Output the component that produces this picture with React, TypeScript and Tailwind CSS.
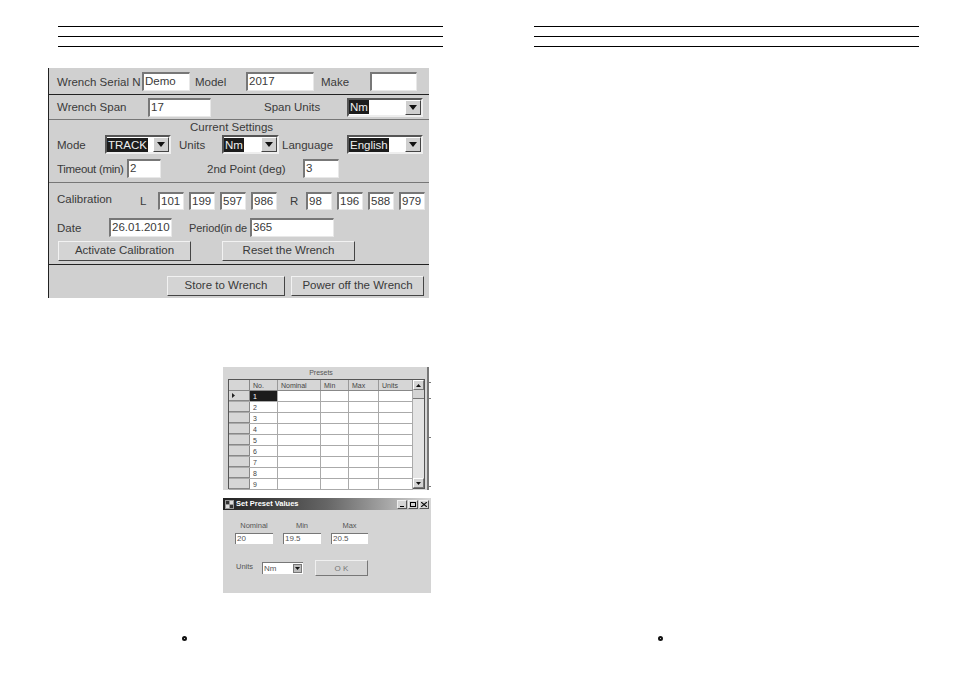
import React from "react";

const sunken = "border-t-2 border-l-2 border-t-[#777] border-l-[#777] border-b border-r border-b-[#e8e8e8] border-r-[#e8e8e8] bg-white";

function Label({ w, children, className = "" }: { w: string; children: React.ReactNode; className?: string }) {
  return <span className={`${w} ${className} shrink-0 whitespace-nowrap text-[11.5px] leading-[14px] text-[#3a3a3a]`}>{children}</span>;
}

function Input({ w, h = "h-[19px]", value, className = "" }: { w: string; h?: string; value?: string; className?: string }) {
  return <div className={`${w} ${h} ${sunken} ${className} shrink-0 flex items-center pl-[1px] text-[11.5px] leading-none text-[#3a3a3a] whitespace-nowrap`}>{value}</div>;
}

function Arrow({ size = "w-[16px] h-[15px]" }: { size?: string }) {
  return (
    <div className={`${size} bg-[#cfcfcf] border border-t-white border-l-white border-b-[#444] border-r-[#444] flex items-center justify-center shrink-0`}>
      <svg width="8" height="5" viewBox="0 0 8 5"><path d="M0 0h8L4 5z" fill="#111" /></svg>
    </div>
  );
}

function Select({ w, value, h = "h-[19px]" }: { w: string; value: string; h?: string }) {
  return (
    <div className={`${w} ${h} border-2 border-t-[#555] border-l-[#555] border-b-[#eee] border-r-[#eee] bg-white shrink-0 flex items-center justify-between`}>
      <span className="bg-[#1c1c1c] text-[#eee] text-[11.5px] leading-[14px] px-[1px]">{value}</span>
      <Arrow />
    </div>
  );
}

function Button({ w, children, className = "" }: { w: string; children: React.ReactNode; className?: string }) {
  return (
    <div className={`${w} ${className} h-[20px] shrink-0 bg-[#d4d4d4] border border-t-[#f2f2f2] border-l-[#f2f2f2] border-b-[#444] border-r-[#444] flex items-center justify-center text-[11.5px] text-[#3a3a3a]`}>
      {children}
    </div>
  );
}

function HeaderLines() {
  return (
    <div className="w-[385px] h-[21px] flex flex-col justify-between">
      <div className="h-px bg-black" />
      <div className="h-px bg-black" />
      <div className="h-px bg-black" />
    </div>
  );
}

function WrenchPanel() {
  const left = ["101", "199", "597", "986"];
  const right = ["98", "196", "588", "979"];
  return (
    <div className="ml-[48px] mt-[21px] w-[381px] h-[230px] bg-[#d0d0d0] border-l border-l-[#222] flex flex-col">
      <div className="h-[27px] border-b border-b-[#222] pl-[8px] pt-[1px] flex items-center shrink-0">
        <Label w="w-[85px]">Wrench Serial N</Label>
        <Input w="w-[48px]" value="Demo" />
        <Label w="w-[51px]" className="ml-[5px]">Model</Label>
        <Input w="w-[68px]" value="2017" />
        <Label w="w-[49px]" className="ml-[7px]">Make</Label>
        <Input w="w-[47px]" />
      </div>
      <div className="h-[25px] border-b border-b-[#777] pl-[8px] flex items-center shrink-0">
        <Label w="w-[91px]">Wrench Span</Label>
        <Input w="w-[63px]" value="17" />
        <Label w="w-[83px]" className="ml-[53px]">Span Units</Label>
        <Select w="w-[76px]" value="Nm" />
      </div>
      <div className="h-[63px] border-b border-b-[#777] pl-[8px] shrink-0 flex flex-col">
        <div className="ml-[133px] text-[11.5px] leading-[14px] text-[#3a3a3a] h-[15px]">Current Settings</div>
        <div className="flex items-center">
          <Label w="w-[48px]">Mode</Label>
          <Select w="w-[66px]" value="TRACK" />
          <Label w="w-[43px]" className="ml-[8px]">Units</Label>
          <Select w="w-[57px]" value="Nm" />
          <Label w="w-[65px]" className="ml-[3px]">Language</Label>
          <Select w="w-[76px]" value="English" />
        </div>
        <div className="flex items-center mt-[5px]">
          <Label w="w-[70px]" className="tracking-[-0.3px]">Timeout (min)</Label>
          <Input w="w-[34px]" value="2" />
          <Label w="w-[96px]" className="ml-[46px]">2nd Point (deg)</Label>
          <Input w="w-[36px]" value="3" />
        </div>
      </div>
      <div className="h-[82px] border-b border-b-[#222] pl-[8px] pt-[9px] shrink-0 flex flex-col">
        <div className="flex items-center">
          <Label w="w-[83px]" className="-mt-[4px]">Calibration</Label>
          <Label w="w-[18px]">L</Label>
          <div className="flex gap-[5px]">
            {left.map((v) => <Input key={v} w="w-[26px]" h="h-[18px]" value={v} />)}
          </div>
          <Label w="w-[16px]" className="ml-[13px]">R</Label>
          <div className="flex gap-[5px]">
            {right.map((v) => <Input key={v} w="w-[26px]" h="h-[18px]" value={v} />)}
          </div>
        </div>
        <div className="flex items-center mt-[8px]">
          <Label w="w-[52px]">Date</Label>
          <Input w="w-[63px]" value="26.01.2010" />
          <Label w="w-[61px]" className="ml-[17px] text-[11px] tracking-[-0.1px]">Period(in de</Label>
          <Input w="w-[84px]" value="365" />
        </div>
        <div className="flex mt-[4px] ml-[1px]">
          <Button w="w-[133px]">Activate Calibration</Button>
          <Button w="w-[133px]" className="ml-[31px]">Reset the Wrench</Button>
        </div>
      </div>
      <div className="flex pl-[118px] pt-[11px]">
        <Button w="w-[118px]">Store to Wrench</Button>
        <Button w="w-[133px]" className="ml-[6px]">Power off the Wrench</Button>
      </div>
    </div>
  );
}

const cols = ["w-[28px]", "w-[43px]", "w-[28px]", "w-[30px]", "w-[34px]"];
const heads = ["No.", "Nominal", "Min", "Max", "Units"];

function Tick({ className }: { className: string }) {
  return <div className={`${className} absolute left-[204px] w-[4px] h-px bg-[#777]`} />;
}

function PresetsPanel() {
  const rows = ["1", "2", "3", "4", "5", "6", "7", "8", "9"];
  return (
    <div className="relative ml-[223px] mt-[69px] w-[206px] h-[123px] bg-[#d6d6d6] border-r-2 border-r-[#777] flex flex-col text-[#444] text-[7px] leading-[11px]">
      <Tick className="top-[15px]" />
      <Tick className="top-[31px]" />
      <Tick className="top-[70px]" />
      <Tick className="top-[119px]" />
      <div className="h-[12px] text-center pr-[8px] pt-[0px] text-[#555]">Presets</div>
      <div className="ml-[5px] w-[197px] h-[110px] border border-[#555] flex">
        <div className="flex-1 flex flex-col min-w-0">
          <div className="flex h-[11px] bg-[#d6d6d6] border-b border-b-[#888] shrink-0">
            <div className="w-[21px] border-r border-r-[#888]" />
            {heads.map((h, i) => (
              <div key={h} className={`${cols[i]} pl-[3px] border-r border-r-[#999]`}>{h}</div>
            ))}
          </div>
          {rows.map((r, ri) => (
            <div key={r} className="flex h-[11px] border-b border-b-[#aaa] shrink-0 bg-white">
              <div className="w-[21px] bg-[#d6d6d6] border-r border-r-[#888] border-b border-b-[#888] flex items-center pl-[3px]">
                {ri === 0 && <svg width="3" height="5" viewBox="0 0 3 5"><path d="M0 0l3 2.5L0 5z" fill="#222" /></svg>}
              </div>
              {cols.map((c, i) => (
                <div key={c + i} className={`${c} ${i === 0 && ri === 0 ? "bg-[#1c1c1c] text-white" : ""} pl-[3px] border-r border-r-[#aaa]`}>{i === 0 ? r : ""}</div>
              ))}
            </div>
          ))}
        </div>
        <div className="w-[11px] bg-[#e4e4e4] flex flex-col justify-between shrink-0">
          <div>
            <Arrowish up />
            <div className="h-[9px] bg-[#d4d4d4] border-b border-b-[#777]" />
          </div>
          <Arrowish />
        </div>
      </div>
    </div>
  );
}

function Arrowish({ up = false }: { up?: boolean }) {
  return (
    <div className="h-[10px] bg-[#d4d4d4] border border-t-white border-l-white border-b-[#777] border-r-[#777] flex items-center justify-center">
      <svg width="5" height="3" viewBox="0 0 5 3"><path d={up ? "M0 3h5L2.5 0z" : "M0 0h5L2.5 3z"} fill="#111" /></svg>
    </div>
  );
}

function SmallInput({ w, value }: { w: string; value: string }) {
  return <div className={`${w} h-[11px] bg-white border-t border-l border-t-[#777] border-l-[#777] text-[8px] leading-[10px] pl-[1px] text-[#555]`}>{value}</div>;
}

function TitleButton({ children }: { children: React.ReactNode }) {
  return <div className="w-[10px] h-[9px] bg-[#d4d4d4] border border-t-[#eee] border-l-[#eee] border-b-[#555] border-r-[#555] flex items-center justify-center">{children}</div>;
}

function PresetDialog() {
  return (
    <div className="ml-[223px] mt-[8px] w-[208px] h-[95px] bg-[#d4d4d4] flex flex-col text-[#555] text-[7.5px] leading-[9px]">
      <div className="h-[12px] bg-gradient-to-r from-[#222] via-[#666] to-[#d8d8d8] flex items-center px-[2px] shrink-0">
        <svg width="9" height="9" viewBox="0 0 9 9" className="shrink-0">
          <rect width="9" height="9" fill="#999" />
          <path d="M1 1h3v3H1zM5 5h3v3H5z" fill="#333" />
          <path d="M5 1h3v3H5zM1 5h3v3H1z" fill="#ddd" />
        </svg>
        <span className="ml-[2px] text-white text-[7.5px] font-bold leading-none flex-1">Set Preset Values</span>
        <div className="flex gap-[1px]">
          <TitleButton><div className="w-[4px] h-px bg-black mt-[4px]" /></TitleButton>
          <TitleButton><div className="w-[6px] h-[5px] border border-black" /></TitleButton>
          <TitleButton>
            <svg width="6" height="5" viewBox="0 0 6 5"><path d="M0 0l6 5M6 0L0 5" stroke="#111" strokeWidth="1.2" /></svg>
          </TitleButton>
        </div>
      </div>
      <div className="flex pl-[12px] pt-[11px] h-[34px] shrink-0">
        <div className="w-[48px] flex flex-col">
          <span className="w-[38px] text-center">Nominal</span>
          <div className="h-[3px]" />
          <SmallInput w="w-[38px]" value="20" />
        </div>
        <div className="w-[48px] flex flex-col">
          <span className="w-[38px] text-center">Min</span>
          <div className="h-[3px]" />
          <SmallInput w="w-[38px]" value="19.5" />
        </div>
        <div className="w-[37px] flex flex-col">
          <span className="text-center">Max</span>
          <div className="h-[3px]" />
          <SmallInput w="w-[37px]" value="20.5" />
        </div>
      </div>
      <div className="flex items-center pl-[13px] mt-[16px]">
        <span className="w-[26px] -mt-[4px]">Units</span>
        <div className="w-[41px] h-[12px] bg-white border-t border-l border-t-[#777] border-l-[#777] flex items-center justify-between text-[8px] pl-[1px]">
          Nm
          <div className="w-[9px] h-[9px] mr-[1px] bg-[#bbb] border border-[#777] flex items-center justify-center">
            <svg width="5" height="3" viewBox="0 0 5 3"><path d="M0 0h5L2.5 3z" fill="#111" /></svg>
          </div>
        </div>
        <div className="ml-[12px] w-[53px] h-[16px] bg-[#d4d4d4] border border-t-[#f0f0f0] border-l-[#f0f0f0] border-b-[#777] border-r-[#777] flex items-center justify-center text-[8px] text-[#777]">O K</div>
      </div>
    </div>
  );
}

function Bullet({ className }: { className: string }) {
  return <div className={`${className} w-[5px] h-[5px] rounded-full border-2 border-[#111] bg-white`} />;
}

export default function App() {
  return (
    <div className="w-[954px] h-[675px] bg-white flex overflow-hidden font-['Liberation_Sans',Arial,sans-serif]">
      <div className="w-[476px] shrink-0 flex flex-col pt-[26px]">
        <div className="ml-[58px]"><HeaderLines /></div>
        <WrenchPanel />
        <PresetsPanel />
        <PresetDialog />
        <Bullet className="ml-[182px] mt-[43px]" />
      </div>
      <div className="flex-1 flex flex-col pt-[26px]">
        <div className="ml-[58px]"><HeaderLines /></div>
        <Bullet className="ml-[182px] mt-[589px]" />
      </div>
    </div>
  );
}
